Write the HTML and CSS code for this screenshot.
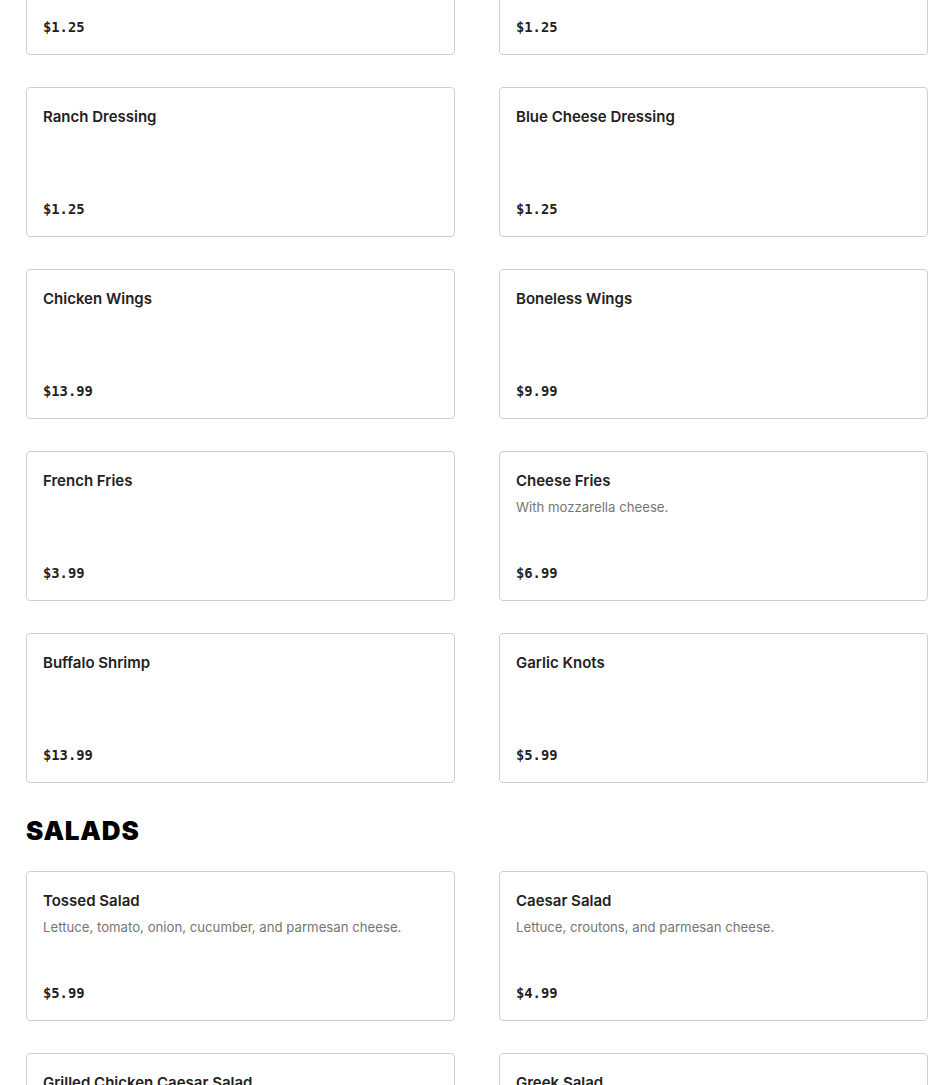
FILE: index.html
```html
<!DOCTYPE html>
<html>
<head>
<meta charset="utf-8">
<link rel="stylesheet" href="styles.css">
</head>
<body>
<main class="menu">
  <section class="section">
    <div class="grid">
      <div class="card"><div class="title">Honey Mustard</div><div class="price">$1.25</div></div>
      <div class="card"><div class="title">BBQ Sauce</div><div class="price">$1.25</div></div>
      <div class="card"><div class="title">Ranch Dressing</div><div class="price">$1.25</div></div>
      <div class="card"><div class="title">Blue Cheese Dressing</div><div class="price">$1.25</div></div>
      <div class="card"><div class="title">Chicken Wings</div><div class="price">$13.99</div></div>
      <div class="card"><div class="title">Boneless Wings</div><div class="price">$9.99</div></div>
      <div class="card"><div class="title">French Fries</div><div class="price">$3.99</div></div>
      <div class="card"><div class="title">Cheese Fries</div><div class="desc">With mozzarella cheese.</div><div class="price">$6.99</div></div>
      <div class="card"><div class="title">Buffalo Shrimp</div><div class="price">$13.99</div></div>
      <div class="card"><div class="title">Garlic Knots</div><div class="price">$5.99</div></div>
    </div>
  </section>
  <section class="section">
    <h2 class="heading">SALADS</h2>
    <div class="grid">
      <div class="card"><div class="title">Tossed Salad</div><div class="desc">Lettuce, tomato, onion, cucumber, and parmesan cheese.</div><div class="price">$5.99</div></div>
      <div class="card"><div class="title">Caesar Salad</div><div class="desc">Lettuce, croutons, and parmesan cheese.</div><div class="price">$4.99</div></div>
      <div class="card"><div class="title">Grilled Chicken Caesar Salad</div><div class="price">$8.99</div></div>
      <div class="card"><div class="title">Greek Salad</div><div class="price">$7.99</div></div>
    </div>
  </section>
</main>
</body>
</html>
```
FILE: styles.css
```css
html, body {
  margin: 0;
  padding: 0;
  background: #fff;
}
body {
  font-family: Inter, "Liberation Sans", sans-serif;
  color: #222;
  overflow: hidden;
  height: 1085px;
}
.menu {
  width: 902px;
  padding-left: 26px;
  margin-top: -95px;
}
.grid {
  display: grid;
  grid-template-columns: 1fr 1fr;
  column-gap: 44px;
  row-gap: 32px;
}
.card {
  box-sizing: border-box;
  min-height: 150px;
  border: 1px solid #cfcfcf;
  border-radius: 4px;
  padding: 18px 16px 16px;
  display: flex;
  flex-direction: column;
}
.title {
  font-size: 15px;
  font-weight: 600;
  line-height: 22px;
  color: #222;
}
.desc {
  margin-top: 3px;
  font-size: 13.2px;
  line-height: 24px;
  color: #767676;
}
.price {
  margin-top: auto;
  font-family: "DejaVu Sans Mono", "Liberation Mono", monospace;
  font-weight: 700;
  font-size: 13.8px;
  line-height: 22px;
  color: #222;
}
.heading {
  margin: 32px 0 24px;
  font-family: Inter, "Liberation Sans", sans-serif;
  font-weight: 900;
  font-size: 26px;
  line-height: 32px;
  color: #000;
  letter-spacing: 0.8px;
}
```
